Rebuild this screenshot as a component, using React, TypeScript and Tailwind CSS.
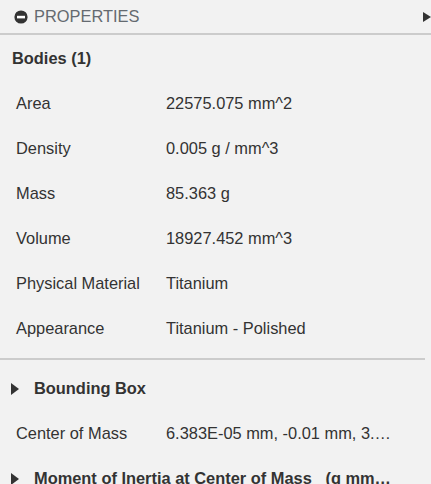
import React from "react";

const rows: [string, string][] = [
  ["Area", "22575.075 mm^2"],
  ["Density", "0.005 g / mm^3"],
  ["Mass", "85.363 g"],
  ["Volume", "18927.452 mm^3"],
  ["Physical Material", "Titanium"],
  ["Appearance", "Titanium - Polished"],
];

function Tri() {
  return (
    <svg width="8" height="12" viewBox="0 0 8 12" className="shrink-0">
      <path d="M0 0 L8 6 L0 12 Z" fill="#333" />
    </svg>
  );
}

export default function App() {
  return (
    <div
      className="w-[431px] h-[484px] overflow-hidden bg-[#f2f2f2] text-[#333] text-[16.4px] leading-none"
      style={{ fontFamily: '"Liberation Sans", Arial, sans-serif' }}
    >
      <div className="relative h-[35px] border-b-2 border-[#cccccc] flex items-center pl-[14px]">
        <svg width="14" height="14" viewBox="0 0 14 14" className="shrink-0">
          <circle cx="7" cy="7" r="6.6" fill="#333" />
          <rect x="3" y="5.8" width="8" height="2.6" fill="#fff" />
        </svg>
        <span className="ml-[6px] text-[#646a70]">PROPERTIES</span>
        <svg width="8" height="10" viewBox="0 0 8 10" className="absolute right-0 top-[12px]">
          <path d="M0 0 L8 5 L0 10 Z" fill="#333" />
        </svg>
      </div>
      <div className="h-[45px] pt-[1px] flex items-center pl-[12px] font-bold">Bodies (1)</div>
      {rows.map(([k, v]) => (
        <div key={k} className="h-[45px] pt-[1px] flex items-center pl-[16px]">
          <span className="w-[150px] shrink-0">{k}</span>
          <span>{v}</span>
        </div>
      ))}
      <div className="mt-[8px] w-[425px] h-[2px] bg-[#cccccc]" />
      <div className="h-[45px] mt-[6px] flex items-center pl-[11px] font-bold">
        <Tri />
        <span className="ml-[15px]">Bounding Box</span>
      </div>
      <div className="h-[45px] flex items-center pl-[16px]">
        <span className="w-[150px] shrink-0">Center of Mass</span>
        <span className="w-[226px] truncate whitespace-nowrap">6.383E-05 mm, -0.01 mm, 3.016 mm</span>
      </div>
      <div className="h-[45px] flex items-center pl-[11px] font-bold">
        <Tri />
        <span className="ml-[15px] w-[362px] truncate whitespace-pre">Moment of Inertia at Center of Mass   (g mm^2)</span>
      </div>
    </div>
  );
}
